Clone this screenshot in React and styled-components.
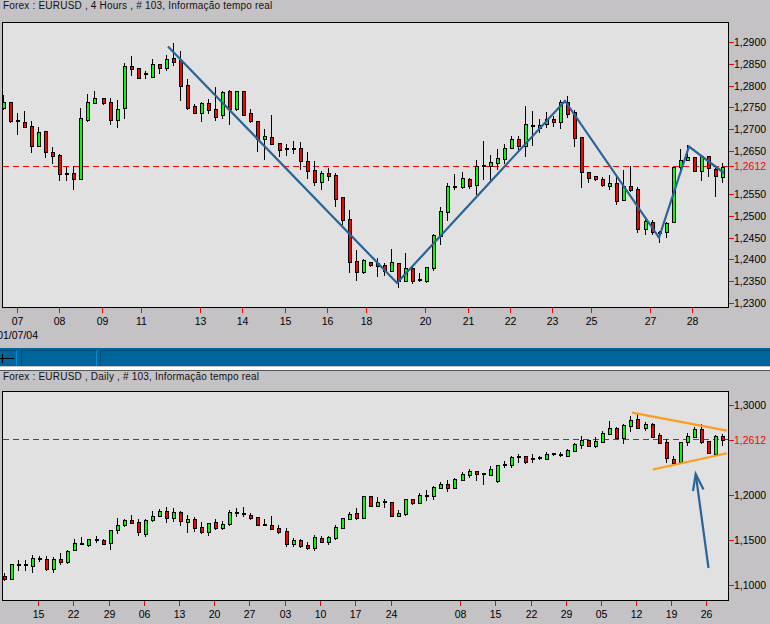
import styled, { createGlobalStyle } from 'styled-components'

// [x, high, bodyTop, bodyBottom, low, kind] in page pixels. kind: g up, r down, d doji
const HOURLY_CANDLES = [
  [3.5, 95, 102, 108, 110, 'g'], [10.3, 102, 102, 121, 123, 'r'], [17.3, 113, 121, 121, 135, 'd'],
  [24.3, 111, 122, 127, 128, 'r'], [31.3, 121, 126, 146, 153, 'r'], [38.3, 127, 132, 146, 146, 'g'],
  [45.3, 131, 131, 152, 158, 'r'], [52.3, 147, 152, 156, 164, 'r'], [59.3, 154, 155, 174, 181, 'r'],
  [66.3, 167, 174, 174, 181, 'd'], [73.3, 166, 173, 179, 190, 'r'], [80.3, 108, 118, 179, 179, 'g'],
  [87.3, 94, 102, 120, 122, 'g'], [94.3, 91, 98, 103, 104, 'g'], [103, 98, 98, 103, 105, 'r'],
  [110, 98, 102, 120, 125, 'r'], [117, 100, 109, 120, 128, 'g'], [124, 63, 66, 108, 119, 'g'],
  [131, 56, 66, 69, 76, 'r'], [138, 68, 68, 78, 79, 'r'], [145, 71, 74, 74, 79, 'd'],
  [152, 59, 64, 77, 77, 'g'], [159, 64, 64, 68, 74, 'r'], [166, 55, 59, 68, 71, 'g'],
  [173, 43, 58, 62, 66, 'r'], [180, 51, 60, 86, 101, 'r'], [187, 79, 85, 108, 110, 'r'],
  [194, 104, 106, 113, 114, 'r'], [201, 102, 103, 113, 122, 'g'], [208, 99, 103, 110, 114, 'r'],
  [215, 87, 109, 117, 121, 'r'], [222, 91, 92, 115, 119, 'g'], [229, 90, 91, 109, 125, 'r'],
  [236, 91, 91, 109, 111, 'g'], [243, 91, 91, 115, 116, 'r'], [250, 109, 113, 121, 123, 'r'],
  [257, 121, 121, 139, 152, 'r'], [264, 129, 136, 139, 160, 'g'], [271, 115, 137, 144, 145, 'r'],
  [279, 143, 143, 150, 157, 'r'], [286, 144, 149, 149, 156, 'd'], [293, 141, 149, 149, 154, 'd'],
  [300, 142, 148, 161, 170, 'r'], [307, 152, 161, 171, 179, 'r'], [314, 161, 170, 182, 186, 'r'],
  [321, 171, 173, 182, 190, 'g'], [328, 168, 173, 176, 181, 'r'], [335, 173, 175, 199, 207, 'r'],
  [342, 197, 197, 220, 225, 'r'], [349, 210, 219, 262, 273, 'r'], [356, 250, 261, 272, 281, 'r'],
  [363, 259, 260, 272, 274, 'g'], [370, 262, 262, 265, 267, 'r'], [377, 258, 263, 266, 277, 'r'],
  [384, 263, 265, 271, 276, 'r'], [391, 249, 262, 271, 272, 'g'], [398, 263, 263, 281, 288, 'r'],
  [405, 253, 268, 281, 281, 'g'], [412, 265, 268, 281, 284, 'r'], [419, 273, 280, 280, 282, 'd'],
  [426, 267, 267, 281, 283, 'g'], [433, 234, 235, 268, 271, 'g'], [440, 207, 211, 236, 245, 'g'],
  [447, 183, 186, 212, 221, 'g'], [454, 174, 187, 187, 190, 'd'], [462, 172, 178, 187, 189, 'g'],
  [469, 178, 179, 186, 189, 'r'], [476, 160, 166, 185, 195, 'g'], [483, 141, 166, 166, 180, 'd'],
  [490, 155, 162, 166, 182, 'g'], [497, 149, 158, 163, 170, 'g'], [504, 144, 148, 159, 164, 'g'],
  [511, 136, 139, 148, 149, 'g'], [518, 136, 139, 146, 151, 'r'], [525, 106, 124, 146, 157, 'g'],
  [532, 111, 126, 126, 146, 'd'], [539, 119, 125, 128, 133, 'g'], [546, 112, 119, 124, 128, 'g'],
  [553, 116, 119, 122, 127, 'r'], [560, 100, 102, 122, 129, 'g'], [567, 96, 102, 114, 118, 'r'],
  [574, 110, 112, 138, 147, 'r'], [581, 137, 137, 172, 188, 'r'], [588, 172, 172, 178, 183, 'r'],
  [595, 176, 176, 179, 181, 'r'], [602, 177, 179, 185, 187, 'r'], [609, 175, 183, 186, 190, 'g'],
  [616, 176, 183, 201, 205, 'r'], [623, 170, 186, 200, 200, 'g'], [630, 166, 186, 190, 192, 'r'],
  [637, 187, 189, 229, 233, 'r'], [645, 219, 221, 229, 235, 'g'], [652, 220, 222, 232, 235, 'r'],
  [659, 231, 233, 233, 243, 'd'], [666, 222, 223, 232, 238, 'g'], [673, 167, 167, 222, 222, 'g'],
  [680, 149, 160, 167, 170, 'g'], [687, 145, 157, 160, 160, 'g'], [694, 157, 157, 171, 171, 'r'],
  [701, 156, 156, 171, 181, 'g'], [708, 156, 156, 168, 177, 'r'], [715, 168, 169, 176, 197, 'r'],
  [722, 163, 167, 177, 183, 'g'],
]

const DAILY_CANDLES = [
  [4, 573, 576, 579, 581, 'r'], [11, 564, 564, 579, 580, 'g'], [18, 560, 565, 565, 571, 'd'],
  [25, 560, 565, 565, 571, 'd'], [32, 555, 558, 566, 573, 'g'], [39, 556, 559, 559, 562, 'd'],
  [46, 556, 559, 569, 571, 'r'], [53, 557, 559, 569, 573, 'g'], [60, 553, 559, 562, 565, 'r'],
  [67, 550, 551, 562, 564, 'g'], [74, 539, 543, 550, 551, 'g'], [81, 537, 544, 544, 545, 'd'],
  [88, 539, 539, 545, 547, 'g'], [96, 536, 540, 540, 543, 'd'], [103, 539, 540, 544, 544, 'r'],
  [110, 530, 530, 543, 550, 'g'], [117, 518, 525, 530, 534, 'g'], [124, 519, 520, 525, 527, 'g'],
  [131, 515, 520, 523, 524, 'r'], [138, 519, 522, 532, 536, 'r'], [145, 519, 520, 534, 537, 'g'],
  [152, 511, 516, 520, 522, 'g'], [159, 509, 511, 516, 516, 'g'], [166, 507, 511, 518, 523, 'r'],
  [173, 508, 512, 518, 522, 'g'], [180, 511, 512, 521, 526, 'r'], [187, 515, 519, 522, 533, 'g'],
  [194, 517, 519, 528, 532, 'r'], [201, 522, 527, 532, 534, 'r'], [208, 523, 523, 532, 536, 'g'],
  [215, 519, 522, 528, 530, 'r'], [222, 521, 524, 528, 530, 'g'], [229, 510, 512, 524, 526, 'g'],
  [236, 508, 513, 513, 517, 'd'], [243, 507, 514, 514, 517, 'd'], [250, 513, 515, 518, 520, 'r'],
  [257, 517, 517, 525, 526, 'r'], [264, 519, 525, 525, 526, 'd'], [271, 516, 525, 529, 529, 'r'],
  [278, 525, 528, 532, 534, 'r'], [286, 528, 531, 544, 547, 'r'], [293, 538, 540, 544, 547, 'g'],
  [300, 539, 540, 546, 548, 'r'], [307, 542, 545, 548, 550, 'r'], [314, 535, 537, 548, 551, 'g'],
  [321, 536, 538, 542, 543, 'r'], [328, 536, 537, 542, 545, 'g'], [335, 525, 527, 538, 540, 'g'],
  [342, 518, 518, 528, 529, 'g'], [349, 512, 514, 519, 520, 'g'], [356, 508, 513, 518, 520, 'r'],
  [363, 496, 496, 518, 519, 'g'], [370, 496, 496, 506, 506, 'r'], [377, 497, 502, 506, 507, 'g'],
  [384, 499, 502, 502, 508, 'd'], [391, 502, 502, 516, 517, 'r'], [398, 510, 513, 516, 517, 'g'],
  [405, 499, 499, 514, 516, 'g'], [412, 499, 499, 503, 505, 'r'], [419, 493, 495, 503, 504, 'g'],
  [426, 490, 496, 496, 501, 'd'], [433, 486, 487, 496, 500, 'g'], [440, 482, 484, 488, 489, 'g'],
  [447, 480, 484, 488, 492, 'r'], [454, 478, 479, 488, 489, 'g'], [462, 472, 474, 480, 481, 'g'],
  [469, 469, 471, 475, 478, 'g'], [476, 471, 471, 474, 481, 'r'], [483, 473, 474, 474, 485, 'd'],
  [490, 466, 469, 475, 476, 'g'], [497, 465, 465, 481, 483, 'g'], [504, 461, 465, 465, 468, 'd'],
  [511, 456, 457, 465, 468, 'g'], [518, 454, 457, 457, 463, 'd'], [525, 456, 456, 462, 464, 'r'],
  [532, 454, 459, 459, 463, 'd'], [539, 456, 458, 458, 460, 'd'], [546, 452, 454, 459, 459, 'g'],
  [553, 453, 454, 454, 456, 'd'], [560, 452, 455, 455, 457, 'd'], [567, 449, 450, 456, 457, 'g'],
  [574, 443, 444, 451, 452, 'g'], [581, 436, 440, 445, 449, 'g'], [588, 440, 440, 446, 447, 'r'],
  [595, 437, 441, 446, 448, 'g'], [602, 431, 433, 442, 443, 'g'], [609, 421, 428, 434, 435, 'g'],
  [616, 427, 428, 438, 439, 'r'], [623, 424, 425, 438, 444, 'g'], [630, 416, 420, 426, 432, 'g'],
  [637, 414, 419, 428, 429, 'r'], [645, 422, 424, 428, 431, 'g'], [652, 423, 424, 437, 438, 'r'],
  [659, 433, 435, 443, 444, 'r'], [666, 439, 442, 458, 463, 'r'], [673, 456, 459, 463, 465, 'r'],
  [680, 442, 442, 462, 463, 'g'], [687, 433, 436, 442, 446, 'g'], [694, 427, 429, 437, 437, 'g'],
  [701, 424, 429, 442, 444, 'r'], [708, 441, 441, 453, 453, 'r'], [715, 435, 436, 454, 455, 'g'],
  [722, 434, 436, 440, 446, 'r'],
]

const HOURLY_PRICES = [
  ['1,2900', 42], ['1,2850', 64], ['1,2800', 86], ['1,2750', 107], ['1,2700', 129], ['1,2650', 151],
  ['1,2550', 194], ['1,2500', 216], ['1,2450', 238], ['1,2400', 259], ['1,2350', 281], ['1,2300', 303],
]
const DAILY_PRICES = [['1,3000', 405], ['1,2000', 495], ['1,1500', 540], ['1,1000', 585]]

const HOURLY_DATES = [
  ['07', 17], ['08', 59], ['09', 102], ['11', 141], ['13', 200], ['14', 242], ['15', 285], ['16', 327],
  ['18', 366], ['20', 425], ['21', 468], ['22', 510], ['23', 552], ['25', 591], ['27', 650], ['28', 692],
]
const DAILY_DATES = [
  ['15', 38], ['22', 73], ['29', 109], ['06', 144], ['13', 179], ['20', 214], ['27', 249], ['03', 285],
  ['10', 320], ['17', 355], ['24', 391], ['08', 460], ['15', 495], ['22', 531], ['29', 566], ['05', 601],
  ['12', 636], ['19', 671], ['26', 706],
]

const BODY_COLORS = { g: '#00ff00', r: '#ff0000' }

function Candle({ candle }) {
  const [x, high, top, bottom, low, kind] = candle
  const left = Math.round(x - 1.5)

  return (
    <g>
      <rect x={left + 1} y={high} width={1} height={low - high} fill="#000" />
      {kind === 'd' ? (
        <rect x={left} y={top - 1} width={4} height={2} fill="#000" />
      ) : (
        <>
          <rect x={left} y={top} width={4} height={bottom - top + 1} fill="#000" />
          <rect x={left + 1} y={top + 1} width={2} height={Math.max(bottom - top - 1, 1)} fill={BODY_COLORS[kind]} />
        </>
      )}
    </g>
  )
}

// frame, candles, price axis and date axis of one chart
function PriceChart({ top, height, plotBottom, candles, prices, dates, lastPriceY, dashY, children }) {
  return (
    <ChartSvg width="770" height={height} viewBox={`0 ${top} 770 ${height}`}>
      <rect x="2.5" y={top + 0.5} width="726" height={plotBottom - top} fill="#e1e1e1" stroke="#000" />
      <g shapeRendering="crispEdges">
        <line x1="3" x2="728" y1={dashY + 0.5} y2={dashY + 0.5} stroke="#ff0000" strokeDasharray="6 4" />
        {candles.map((candle) => (
          <Candle key={candle[0]} candle={candle} />
        ))}
        {prices.map(([label, y]) => (
          <rect key={label} x="729" y={y} width="5" height="1" fill="#ff0000" />
        ))}
        <rect x="729" y={lastPriceY} width="5" height="1" fill="#ff0000" />
        {dates.map(([label, x]) => (
          <rect key={`${label}-${x}`} x={x} y={plotBottom + 1} width="1" height="5" fill="#ff0000" />
        ))}
      </g>
      {children}
      {prices.map(([label, y]) => (
        <AxisText key={label} x="734" y={y + 4}>{label}</AxisText>
      ))}
      <AxisText x="734" y={lastPriceY + 4} fill="#ff0000">1,2612</AxisText>
      {dates.map(([label, x]) => (
        <AxisText key={`${label}-${x}`} x={x + 0.5} y={plotBottom + 18} textAnchor="middle">{label}</AxisText>
      ))}
    </ChartSvg>
  )
}

function App() {
  return (
    <Screen>
      <GlobalStyle />

      <PanelTitle $height={22}>Forex : EURUSD , 4 Hours , # 103, Informação tempo real</PanelTitle>
      <PriceChart
        top={22}
        height={326}
        plotBottom={307}
        candles={HOURLY_CANDLES}
        prices={HOURLY_PRICES}
        dates={HOURLY_DATES}
        lastPriceY={166}
        dashY={166}
      >
        <TrendLine points="168,46.5 397,283 565,101 659,237.5 689,146.5 724,173" stroke="#2a6496" />
        <AxisText x="38" y="339" textAnchor="end">01/07/04</AxisText>
      </PriceChart>

      <ScrollTrack>
        <ScrollCell $width={17}>
          <svg width="15" height="9" viewBox="0 0 15 9">
            <path d="M0 4.5H14M2.5 0V9" stroke="#000" fill="none" />
          </svg>
        </ScrollCell>
        <ScrollCell $width={76} $offset={4} />
        <ScrollCell $grow $offset={3} />
      </ScrollTrack>
      <ScrollEdge />

      <PanelTitle $height={20}>Forex : EURUSD , Daily , # 103, Informação tempo real</PanelTitle>
      <PriceChart
        top={391}
        height={233}
        plotBottom={600}
        candles={DAILY_CANDLES}
        prices={DAILY_PRICES}
        dates={DAILY_DATES}
        lastPriceY={440}
        dashY={439}
      >
        <TrendLine points="632,412.7 727,430.7" stroke="#ff9c1e" />
        <TrendLine points="653,469.5 727,453.3" stroke="#ff9c1e" />
        <TrendLine points="708.5,568 695.7,474" stroke="#2a6496" />
        <TrendLine points="693,491 695.7,474 703.5,489.5" stroke="#2a6496" />
      </PriceChart>
    </Screen>
  )
}

export default App

/* styled-components */

const GlobalStyle = createGlobalStyle`
  body {
    margin: 0;
    background: #c4c2c5;
  }
`

const Screen = styled.div`
  width: 770px;
  height: 624px;
  overflow: hidden;
  display: flex;
  flex-direction: column;
  background: #c4c2c5;
  font-family: 'Liberation Sans', Arial, sans-serif;
`

const PanelTitle = styled.div`
  height: ${({ $height }) => $height}px;
  padding-left: 3px;
  box-sizing: border-box;
  font-size: 10px;
  line-height: 12px;
  letter-spacing: 0.2px;
  color: #111;
  white-space: nowrap;
`

const ChartSvg = styled.svg`
  display: block;
  flex: none;
`

const AxisText = styled.text`
  font-family: 'Liberation Sans', Arial, sans-serif;
  font-size: 10.5px;
  fill: ${({ fill }) => fill || '#000'};
`

const TrendLine = styled.polyline`
  fill: none;
  stroke-width: 2.2;
`

const ScrollTrack = styled.div`
  display: flex;
  height: 18px;
  flex: none;
  padding-top: 2px;
  box-sizing: border-box;
  background: #00659b;
`

const ScrollCell = styled.div`
  display: flex;
  align-items: center;
  width: ${({ $width }) => ($width ? `${$width}px` : 'auto')};
  flex: ${({ $grow }) => ($grow ? 1 : 'none')};
  margin-left: ${({ $offset }) => $offset || 0}px;
  box-sizing: border-box;
  border-top: 1px solid #004a75;
  border-left: ${({ $offset }) => ($offset ? '1px solid #004a75' : 'none')};
  border-right: ${({ $grow }) => ($grow ? 'none' : '1px solid #0a8ad2')};
`

const ScrollEdge = styled.div`
  height: 5px;
  flex: none;
  box-sizing: border-box;
  background: #fff;
  border-top: 1px solid #c4c2c5;
  border-bottom: 1px solid #55565a;
`
